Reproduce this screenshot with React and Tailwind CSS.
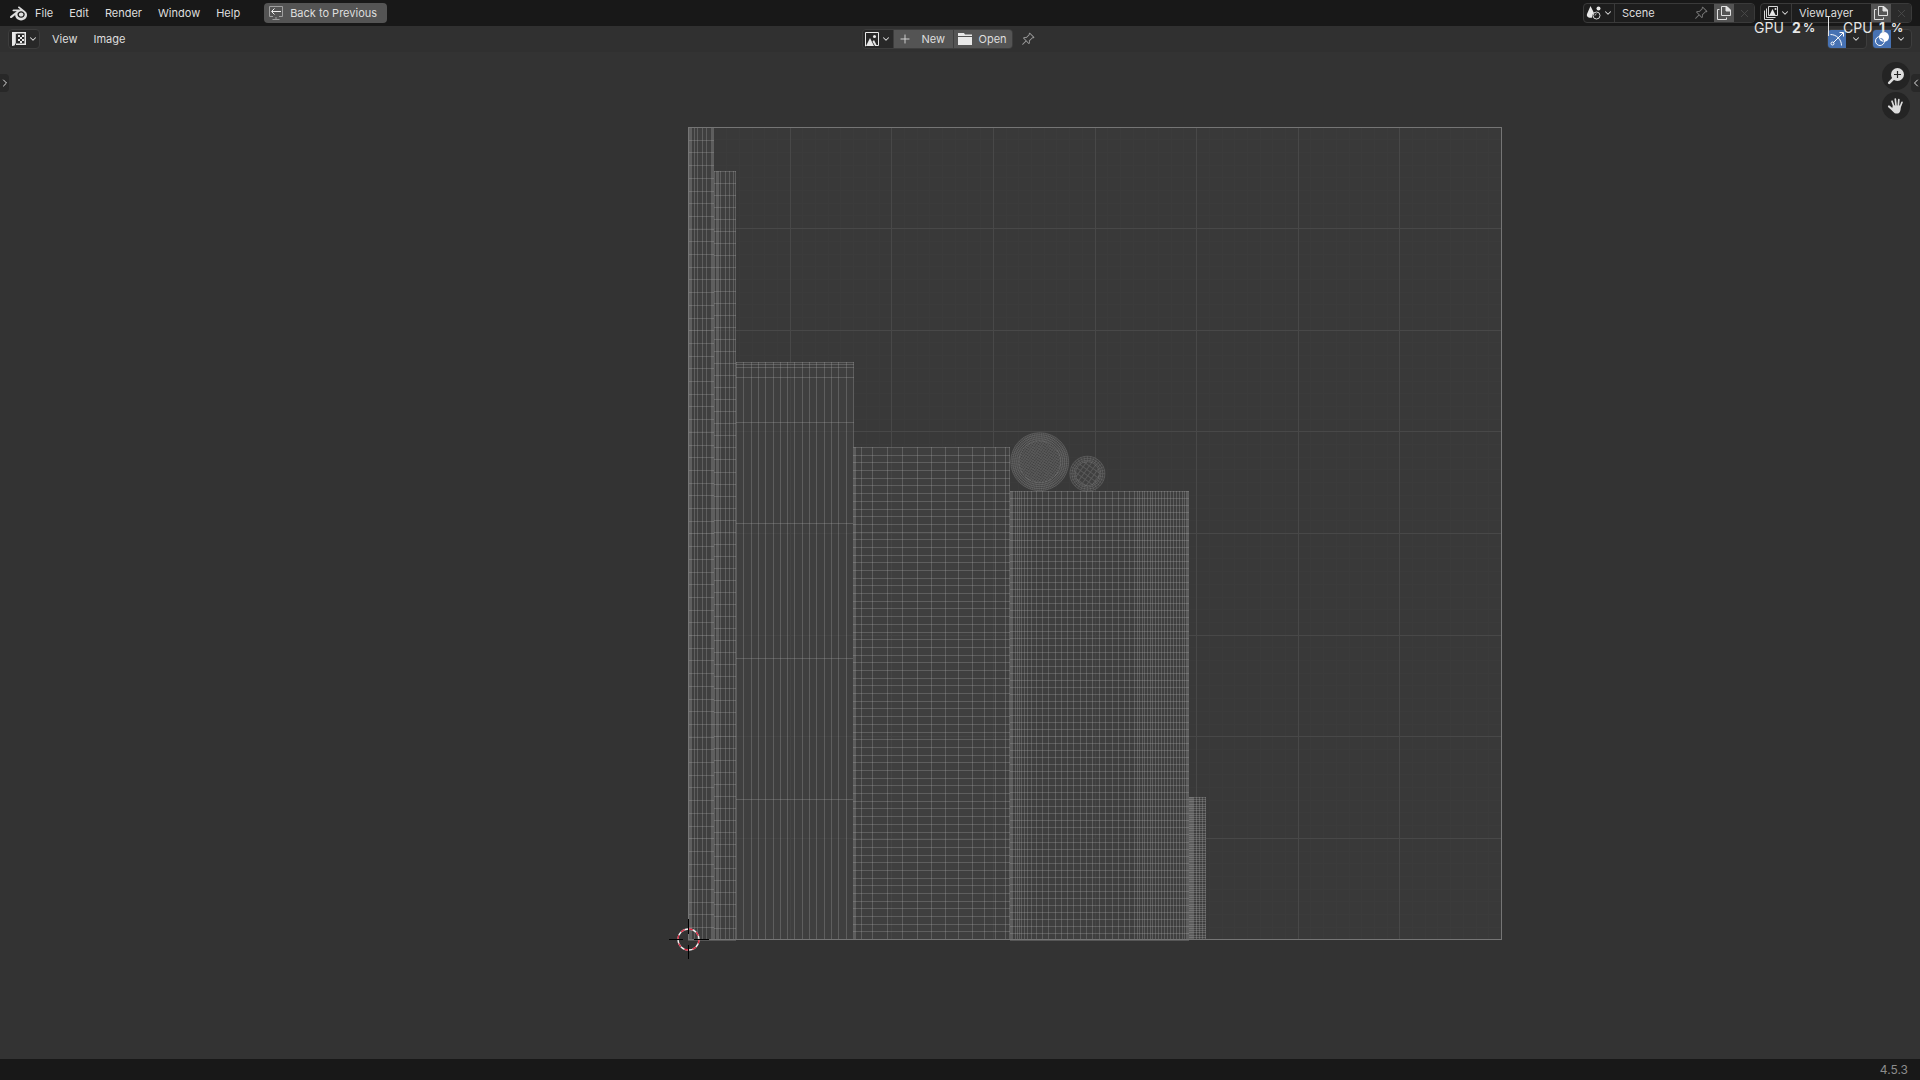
import { useState } from "react";
import { SiBlender } from "react-icons/si";
import { BsPinAngle } from "react-icons/bs";
import { ChevronDown, ChevronLeft, ChevronRight, Plus, X } from "lucide-react";

const range = (n) => Array.from({ length: n }, (_, i) => i);

// UV tile: one unit square in canvas pixels (canvas starts under the two bars)
const TILE = { x: 688, y: 75, size: 813 };

const ISLANDS = [
  {
    x: 688, y: 75, w: 26, h: 813,
    cols: [0, 1, 2, 3, 6, 9, 14, 18, 23, 24, 25],
    rows: range(65).map((i) => i * 12.7),
  },
  {
    x: 714, y: 119, w: 22, h: 769,
    cols: [0, 2, 3, 4, 6, 11, 15, 19, 21],
    rows: range(65).map((i) => i * 12.02),
  },
  {
    x: 736, y: 310, w: 118, h: 578,
    cols: range(17).map((i) => i * 7.3),
    rows: [0, 2, 5, 15, 60, 161, 296, 437],
  },
  {
    x: 853, y: 395, w: 157, h: 493,
    cols: [0, 1, 2, 8, 19, 34, 49, 64, 78, 92, 105, 119, 131, 142, 152, 156],
    rows: range(65).map((i) => i * 7.69),
  },
  {
    x: 1010, y: 439, w: 179, h: 449,
    cols: [
      0, 1, 2, 5, 7, 9, 11, 14, 17, 21, 26, 32, 38, 45, 51, 57, 63, 70, 76, 82, 89, 95, 102, 108, 114, 119, 124, 127,
      129, 132, 134, 137, 140, 142, 145, 148, 151, 154, 157, 160, 163, 166, 169, 172, 174, 176, 177, 178,
    ],
    rows: range(65).map((i) => i * 7.01),
  },
  {
    x: 1189, y: 745, w: 17, h: 143,
    cols: [0, 1, 2, 3, 4, 7, 10, 13, 16],
    rows: range(65).map((i) => i * 2.22),
  },
];

function Island({ x, y, w, h, cols, rows }) {
  const v = cols.map((c) => `M${x + Math.round(c)} ${y}h1v${h}h-1z`).join("");
  const r = rows.map((c) => `M${x} ${y + Math.round(c)}h${w}v1h-${w}z`).join("");
  return (
    <g>
      <rect x={x} y={y} width={w} height={h} fill="#3f3f3f" />
      <path d={v} fill="#b0b0b0" fillOpacity="0.28" />
      <path d={r} fill="#b0b0b0" fillOpacity="0.28" />
    </g>
  );
}

function Disc({ cx, cy, r, inner, step, rings, spokes }) {
  const lines = [];
  for (let d = -inner; d <= inner; d += step) {
    const half = Math.sqrt(inner * inner - d * d);
    lines.push(`M${-half} ${d}H${half}M${d} ${-half}V${half}`);
  }
  const rays = range(spokes).map((i) => {
    const a = (i / spokes) * Math.PI * 2;
    const c = Math.cos(a);
    const s = Math.sin(a);
    return `M${c * inner} ${s * inner}L${c * r} ${s * r}`;
  });
  return (
    <g transform={`translate(${cx} ${cy})`} fill="none" stroke="#b0b0b0" strokeOpacity="0.22">
      <circle r={r} fill="#404040" />
      {rings.map((ring) => (
        <circle key={ring} r={ring} />
      ))}
      <path d={rays.join("")} strokeOpacity="0.16" />
      <path d={lines.join("")} transform="rotate(36)" />
    </g>
  );
}

function Cursor2D({ x, y }) {
  return (
    <g transform={`translate(${x} ${y})`} fill="none">
      <circle r="10.5" stroke="#f0f0f0" strokeWidth="1.3" />
      <circle r="10.5" stroke="#d8223c" strokeWidth="1.3" strokeDasharray="4.12 4.12" />
      <path d="M-19.5 0h14M5.5 0h15M0 -20.5v15M0 5.5v14" stroke="#000" />
    </g>
  );
}

function UVCanvas() {
  const { x, y, size } = TILE;
  const grid = (n) =>
    range(n - 1)
      .map((i) => ((i + 1) * size) / n)
      .map((m) => `M${x + Math.round(m)} ${y}h1v${size}h-1zM${x} ${y + Math.floor(m)}h${size}v1h-${size}z`)
      .join("");
  return (
    <svg className="block w-full flex-1" role="img" aria-label="UV layout">
      <rect x={x} y={y} width={size} height={size} fill="#393939" />
      <path fill="#3b3b3b" d={grid(64)} />
      <path fill="#434343" d={grid(8)} />
      {ISLANDS.map((island) => (
        <Island key={island.x} {...island} />
      ))}
      <Disc cx={1039.7} cy={409.7} r={29} inner={21} step={2.2} rings={[27, 25, 23, 21]} spokes={96} />
      <Disc cx={1087.4} cy={421.7} r={17.5} inner={12} step={4.5} rings={[15.5, 13.5, 12]} spokes={32} />
      <path fill="#fff" fillOpacity="0.03" d={grid(8)} />
      <rect x={x + 0.5} y={y + 0.5} width={size} height={size - 1} fill="none" stroke="#757575" />
      <Cursor2D x={688.5} y={887.5} />
    </svg>
  );
}

function BackIcon() {
  return (
    <svg width="16" height="16" viewBox="0 0 16 16" fill="none" stroke="#c8c8c8" aria-hidden="true">
      <path d="M5 11.500H1.500v-10h13v10H11M8 12v2.500M4.500 14.500h7" stroke="#a0a0a0" />
      <path d="M13 6.500H4M6.500 3.500l-3 3 3 3" stroke="#eee" />
    </svg>
  );
}

function UVEditorIcon() {
  return (
    <svg width="16" height="16" viewBox="0 0 16 16" fill="#e8e8e8" aria-hidden="true">
      <path d="M1 1h5v1.500H4.800V12L3.500 14.500 1 15z" />
      <path d="M5 1h10v13H5v-1.500h8.500v-10H5z" />
      <path d="M7 4h2v2H7zM11 4h2v2h-2zM9 6h2v2H9zM7 8h2v2H7zM11 8h2v2h-2zM9 10h2v2H9z" />
    </svg>
  );
}

function ImageIcon() {
  return (
    <svg width="16" height="16" viewBox="0 0 16 16" aria-hidden="true">
      <path d="M2 15H1.500V1.500h13v13H12" fill="none" stroke="#e8e8e8" />
      <path d="M2 15l4-8 4 8z" fill="#e8e8e8" />
      <path d="M8.500 10.500l1.500-1.500 3 6h-2z" fill="#e8e8e8" />
      <circle cx="10.500" cy="5.500" r="1.500" fill="#e8e8e8" />
    </svg>
  );
}

function FolderIcon() {
  return (
    <svg width="16" height="16" viewBox="0 0 16 16" fill="#e8e8e8" aria-hidden="true">
      <path d="M1 2h6l1 1.500h7V5H1zM1 6h14v8H1z" />
    </svg>
  );
}

function SceneIcon() {
  return (
    <svg width="16" height="16" viewBox="0 0 16 16" aria-hidden="true">
      <path d="M4.500 1L8 8c-1 .8-2 2-1.800 4.500-3 .7-6-.3-5.200-3.500z" fill="#e8e8e8" />
      <circle cx="10.500" cy="10.500" r="3.500" fill="none" stroke="#d8d8d8" />
      <path d="M9 10.500c0-1 .6-1.600 1.500-1.700" fill="none" stroke="#d8d8d8" />
      <circle cx="12.500" cy="3.500" r="2" fill="#e8e8e8" />
    </svg>
  );
}

function LayersIcon() {
  return (
    <svg width="16" height="16" viewBox="0 0 16 16" fill="none" stroke="#d8d8d8" aria-hidden="true">
      <path d="M1.500 5.500v9h9M3.500 3.500v9h9" />
      <path d="M5.500 1.500h9v9h-9z" />
      <path d="M6.500 10l3-6 3 6z" fill="#e8e8e8" stroke="none" />
      <circle cx="12.500" cy="4" r="1" fill="#e8e8e8" stroke="none" />
    </svg>
  );
}

function DuplicateIcon() {
  return (
    <svg width="16" height="16" viewBox="0 0 16 16" fill="none" stroke="#e0e0e0" aria-hidden="true">
      <path d="M5.500 1.500h5l4 4v5h-9z" />
      <path d="M10 1.500h1l3.500 3.500v1H10z" fill="#e0e0e0" />
      <path d="M3.500 4.500h-2v10h9v-2" />
    </svg>
  );
}

function GizmoIcon() {
  return (
    <svg width="16" height="16" viewBox="0 0 16 16" fill="none" stroke="#fff" aria-hidden="true">
      <path d="M1.500 3.500c6 0 11 5 11 11" />
      <path d="M4 12L14 2M10.500 1.500h4v4" />
      <circle cx="3.500" cy="12.500" r="1.500" />
    </svg>
  );
}

function OverlayIcon() {
  return (
    <svg width="16" height="16" viewBox="0 0 16 16" aria-hidden="true">
      <circle cx="6" cy="10" r="4.500" fill="none" stroke="#fff" />
      <circle cx="10" cy="6" r="5" fill="#fff" />
      <path d="M6.500 7.500a3 3 0 0 1 3 3" fill="none" stroke="#4772b3" />
    </svg>
  );
}

function ZoomIcon() {
  return (
    <svg width="18" height="18" viewBox="0 0 18 18" aria-hidden="true">
      <path d="M2.200 15.800L7 11" stroke="#dcdcdc" strokeWidth="2.600" strokeLinecap="round" />
      <circle cx="10.500" cy="7.500" r="6.500" fill="#dcdcdc" />
      <path d="M10.500 4v7M7 7.500h7" stroke="#222" strokeWidth="1.200" />
    </svg>
  );
}

function HandIcon() {
  return (
    <svg width="18" height="18" viewBox="0 0 18 18" fill="none" stroke="#dcdcdc" strokeLinecap="round" aria-hidden="true">
      <path d="M6.800 9L5 4.200M9 8.500L8.300 2.200M11.300 8.500l.5-5.800M13.300 9.500L15 5.300" strokeWidth="1.700" />
      <path d="M6.500 13.500L2 9.500" strokeWidth="2.200" />
      <path d="M5.900 8.500l8.200 0-.6 4.500c-.4 2-1.500 3.500-2.800 3.500H8.800c-1.500 0-3-2-4-4z" fill="#dcdcdc" stroke="none" />
    </svg>
  );
}

function Menu({ items }) {
  return items.map((item) => (
    <button key={item} type="button" className="h-5">
      {item}
    </button>
  ));
}

function DropButton({ label, children }) {
  return (
    <button
      type="button"
      aria-label={label}
      aria-haspopup="menu"
      className="flex h-full w-[30px] items-center justify-center gap-px"
    >
      {children}
      <ChevronDown size={10} strokeWidth={2.500} />
    </button>
  );
}

function DataBlock({ label, icon, value, onChange, pin, className }) {
  return (
    <div className={`flex h-5 overflow-hidden rounded border border-[#3a3a3a] bg-[#1d1d1d] ${className}`}>
      <DropButton label={`Browse ${label}`}>{icon}</DropButton>
      <input
        aria-label={label}
        value={value}
        onChange={(e) => onChange(e.target.value)}
        className="min-w-0 flex-1 border-l border-[#3a3a3a] bg-transparent pl-[7px] outline-none"
      />
      {pin && (
        <button type="button" aria-label="Pin scene" className="flex w-5 items-center text-[#777]">
          <BsPinAngle size={14} />
        </button>
      )}
      <button type="button" aria-label={`New ${label}`} className="flex w-5 items-center justify-center bg-[#545454]">
        <DuplicateIcon />
      </button>
      <button
        type="button"
        aria-label={`Remove ${label}`}
        className="flex w-5 items-center justify-center bg-[#2b2b2b] text-[#4d4d4d]"
      >
        <X size={13} strokeWidth={1.500} />
      </button>
    </div>
  );
}

function ToggleGroup({ label, children }) {
  return (
    <div className="flex h-5 w-10 overflow-hidden rounded border border-[#3d3d3d] bg-[#282828]">
      <button type="button" aria-label={label} aria-pressed="true" className="flex w-[18px] items-center justify-center bg-[#4772b3]">
        {children}
      </button>
      <button type="button" aria-label={`${label} options`} className="flex flex-1 items-center justify-center">
        <ChevronDown size={10} strokeWidth={2.500} />
      </button>
    </div>
  );
}

// Hardware monitor drawn on top of the window
function Monitor() {
  return (
    <div className="pointer-events-none absolute top-4 right-4 flex h-6 items-center text-sm text-[#e6e6e6]">
      <span className="w-[38px]">GPU</span>
      <b className="w-[11px]">2</b>
      <b className="w-[25px] text-xs">%</b>
      <span className="h-5 w-[15px] self-start border-l border-[#e6e6e6]" />
      <span className="w-9">CPU</span>
      <b className="w-3">1</b>
      <b className="w-[13px] text-xs">%</b>
    </div>
  );
}

export default function App() {
  const [scene, setScene] = useState("Scene");
  const [layer, setLayer] = useState("ViewLayer");

  return (
    <div className="relative flex min-h-screen flex-col bg-[#333333] font-['Inter',sans-serif] text-[11px] leading-4 text-[#dedede]">
      <header className="flex h-[26px] items-center justify-between bg-[#181818] px-2">
        <nav className="flex items-center gap-4">
          <button type="button" aria-label="Blender" className="-mr-[9px] flex w-5 justify-center">
            <SiBlender size={17} />
          </button>
          <Menu items={["File", "Edit", "Render", "Window", "Help"]} />
          <button type="button" className="ml-2 flex h-5 w-[123px] items-center gap-[6px] rounded bg-[#545454] pl-1">
            <BackIcon />
            Back to Previous
          </button>
        </nav>
        <div className="flex items-center gap-[5px]">
          <DataBlock label="Scene" icon={<SceneIcon />} value={scene} onChange={setScene} pin className="w-[172px]" />
          <DataBlock label="View layer" icon={<LayersIcon />} value={layer} onChange={setLayer} className="w-[152px]" />
        </div>
      </header>

      <div className="grid h-[26px] grid-cols-[1fr_auto_1fr] items-center bg-[#303030] px-2">
        <nav className="flex items-center gap-4">
          <div className="-mr-1 h-5 rounded border border-[#3d3d3d] bg-[#282828]">
            <DropButton label="Editor type">
              <UVEditorIcon />
            </DropButton>
          </div>
          <Menu items={["View", "Image"]} />
        </nav>
        <div className="flex items-center pr-6">
          <div className="flex h-5 w-[151px] gap-px overflow-hidden rounded border border-[#3d3d3d] bg-[#3d3d3d]">
            <div className="bg-[#282828]">
              <DropButton label="Browse image">
                <ImageIcon />
              </DropButton>
            </div>
            <button type="button" className="flex flex-1 items-center gap-[10px] bg-[#545454] pl-1">
              <Plus size={14} strokeWidth={1.500} />
              New
            </button>
            <button type="button" className="flex flex-1 items-center gap-[6px] bg-[#545454] pl-[3px]">
              <FolderIcon />
              Open
            </button>
          </div>
          <button type="button" aria-label="Pin image" className="ml-2 text-[#999]">
            <BsPinAngle size={14} />
          </button>
        </div>
        <div className="flex justify-end gap-[5px]">
          <ToggleGroup label="Gizmos">
            <GizmoIcon />
          </ToggleGroup>
          <ToggleGroup label="Overlays">
            <OverlayIcon />
          </ToggleGroup>
        </div>
      </div>

      <main className="relative flex flex-1">
        <UVCanvas />
        <button type="button" aria-label="Show tools" className="absolute top-[22px] left-0 flex h-[18px] w-[9px] items-center justify-center rounded-r bg-[#282828]">
          <ChevronRight size={12} className="shrink-0" />
        </button>
        <button type="button" aria-label="Show sidebar" className="absolute top-[22px] right-0 flex h-[18px] w-[9px] items-center justify-center rounded-l bg-[#282828]">
          <ChevronLeft size={12} className="shrink-0" />
        </button>
        <div className="absolute top-[10px] right-[10px] flex flex-col gap-[2px]">
          <button type="button" aria-label="Zoom" className="flex size-7 items-center justify-center rounded-full bg-[#242424]">
            <ZoomIcon />
          </button>
          <button type="button" aria-label="Pan" className="flex size-7 items-center justify-center rounded-full bg-[#242424]">
            <HandIcon />
          </button>
        </div>
      </main>

      <footer className="flex h-[21px] items-center justify-end bg-[#181818] px-3 text-xs text-[#8c8c8c]">4.5.3</footer>
      <Monitor />
    </div>
  );
}
